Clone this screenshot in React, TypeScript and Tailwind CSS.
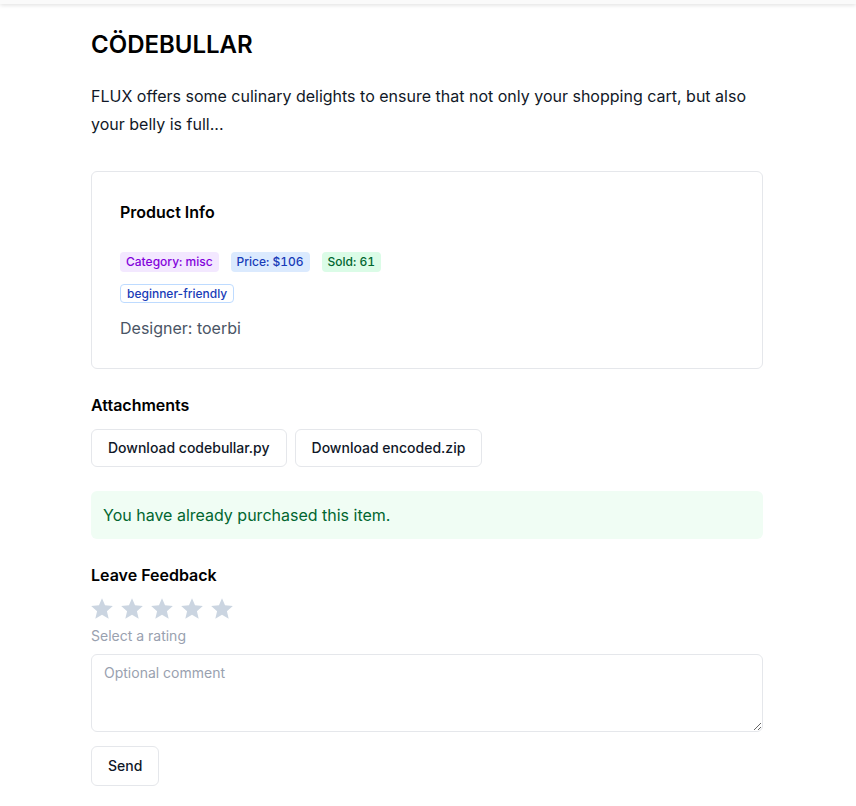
const Star = () => (
  <svg viewBox="0 0 24 24" className="w-[26px] h-[26px] fill-[#cbd5e1]">
    <path d="M12 17.27L18.18 21l-1.64-7.03L22 9.24l-7.19-.61L12 2 9.19 8.63 2 9.24l5.46 4.73L5.82 21z" />
  </svg>
);

const App = () => {
  return (
    <div className="min-h-screen bg-white text-[#111827] font-['Inter','Noto_Sans',sans-serif]">
      <div className="h-1 bg-[#fafafa] shadow-[0_1px_4px_rgba(0,0,0,0.14)]"></div>
      <div className="pr-[2px]">
        <main className="max-w-2xl mx-auto pt-[25px] pb-5">
          <h1 className="text-2xl leading-8 font-semibold text-black">CÖDEBULLAR</h1>
          <p className="mt-[21px] text-base leading-7 text-[#111827]">
            FLUX offers some culinary delights to ensure that not only your shopping cart, but also
            your belly is full...
          </p>

          {/* product info */}
          <section className="mt-[33px] border border-gray-200 rounded-md p-7">
            <h2 className="text-base leading-6 font-semibold text-black">Product Info</h2>
            <div className="mt-7 flex items-center gap-3 text-xs leading-5 font-medium tabular-nums">
              <span className="bg-purple-100 text-purple-700 px-1.5 rounded">Category: misc</span>
              <span className="bg-blue-100 text-blue-800 px-1.5 rounded">Price: $106</span>
              <span className="bg-green-100 text-green-800 px-1.5 rounded">Sold: 61</span>
            </div>
            <div className="mt-3 flex">
              <span className="border border-blue-200 text-blue-800 text-xs font-medium leading-[17px] px-1.5 rounded">
                beginner-friendly
              </span>
            </div>
            <p className="mt-[13px] text-base leading-6 text-gray-600">Designer: toerbi</p>
          </section>

          {/* attachments */}
          <h3 className="mt-6 text-base leading-6 font-semibold text-black">Attachments</h3>
          <div className="mt-3 flex gap-2">
            <button className="border border-gray-200 rounded-md px-4 py-2 text-sm leading-5 font-medium text-gray-900 bg-white">
              Download codebullar.py
            </button>
            <button className="border border-gray-200 rounded-md px-4 py-2 text-sm leading-5 font-medium text-gray-900 bg-white">
              Download encoded.zip
            </button>
          </div>

          <div className="mt-6 bg-green-50 text-green-800 rounded-md px-3 py-3 text-base leading-6">
            You have already purchased this item.
          </div>

          {/* feedback */}
          <h3 className="mt-6 text-base leading-6 font-semibold text-black">Leave Feedback</h3>
          <div className="mt-[9px] -ml-0.5 flex gap-1">
            <Star />
            <Star />
            <Star />
            <Star />
            <Star />
          </div>
          <p className="mt-1 text-sm leading-5 text-gray-400">Select a rating</p>
          <textarea
            placeholder="Optional comment"
            className="mt-2 block w-full h-[78px] border border-gray-200 rounded-md px-3 py-2 text-sm leading-5 placeholder:text-gray-400 outline-none"
          ></textarea>
          <button className="mt-3.5 border border-gray-200 rounded-md px-4 h-10 text-sm font-medium text-gray-900 bg-white">
            Send
          </button>
        </main>
      </div>
    </div>
  );
};

export default App;
